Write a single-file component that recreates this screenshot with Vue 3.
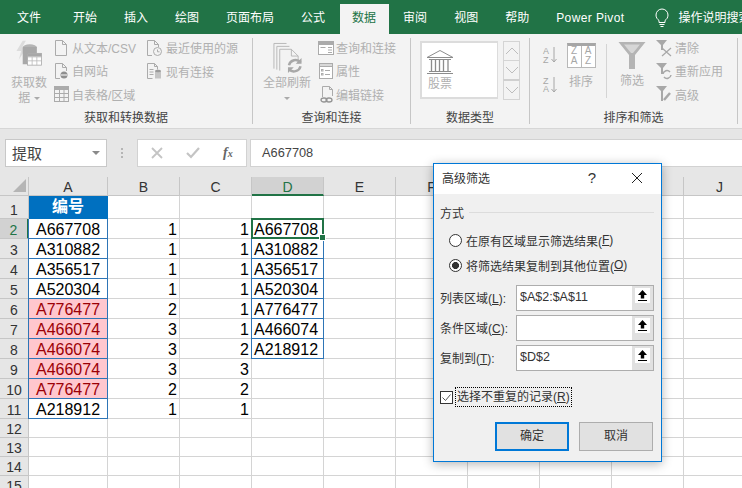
<script setup>
const tabs = ['开始','插入','绘图','页面布局','公式','数据','审阅','视图','帮助','Power Pivot']
const cols = ['A','B','C','D','E','F','G','H','I','J']
const codes = ['A667708','A310882','A356517','A520304','A776477','A466074','A466074','A466074','A776477','A218912']
const bVals = [1,1,1,1,2,3,3,3,2,1]
const cVals = [1,1,1,1,1,1,2,3,2,1]
const dVals = ['A667708','A310882','A356517','A520304','A776477','A466074','A218912']
const rows = []
for (let r = 1; r <= 15; r++) {
  const i = r - 2
  rows.push({
    r,
    a: r === 1 ? '编号' : (codes[i] || ''),
    b: bVals[i] ?? '',
    c: cVals[i] ?? '',
    d: dVals[i] || '',
    red: r >= 6 && r <= 10,
    blueA: r >= 2 && r <= 11,
    blueD: r >= 3 && r <= 8,
    tall: r === 1,
    short: r > 11
  })
}
const fields = [
  { label: '列表区域', key: 'L', value: '$A$2:$A$11', cls: 'f1' },
  { label: '条件区域', key: 'C', value: '', cls: 'f2' },
  { label: '复制到', key: 'T', value: '$D$2', cls: 'f3' }
]
</script>

<template>
  <div class="app">
    <div class="tabbar">
      <div class="tab first">文件</div>
      <div v-for="t in tabs" :key="t" class="tab" :class="{ active: t === '数据', latin: t === 'Power Pivot' }">{{ t }}</div>
      <svg class="bulb" width="16" height="22" viewBox="0 0 16 22" fill="none" stroke="#fff" stroke-width="1">
        <path d="M5 15.500V13.500C3.500 12.300 2 10.800 2 8a6 6 0 0 1 12 0c0 2.800-1.500 4.300-3 5.500v2z"/>
        <path d="M5.500 17.500h5M6.500 19.500h3"/>
      </svg>
      <div class="search">操作说明搜索</div>
    </div>

    <div class="ribbon">
      <div class="group g1">
        <div class="gbody">
          <div class="big big1">
            <svg width="34" height="42" viewBox="0 0 34 42">
              <path d="M9 1L1 14h6l-3 11 10-15H8l5-9z" fill="#dcdcdc"/>
              <ellipse cx="18" cy="9" rx="9" ry="3.500" fill="#b5b5b5"/>
              <path d="M9 9v22h10V18h8V9z" fill="#a8a8a8"/>
              <rect x="15" y="17" width="18" height="15" fill="#fff" stroke="#a8a8a8"/>
              <path d="M15 21.500h18M15 26.500h18M21 21.500V32M27 21.500V32" stroke="#b8b8b8" fill="none"/>
              <rect x="15" y="17" width="18" height="4" fill="#a8a8a8"/>
            </svg>
            <div class="lbl2">获取数<br>据 <span class="caret"></span></div>
          </div>
          <div class="col c1">
            <div class="item"><svg class="ic" width="16" height="18" viewBox="0 0 16 18" fill="none" stroke="#ababab"><path d="M2.500 1.500h7l4 4v11h-11zM9.500 1.500v4h4"/></svg>从文本/CSV</div>
            <div class="item"><svg class="ic" width="16" height="18" viewBox="0 0 16 18" fill="none" stroke="#ababab"><path d="M7 16.500H2.500v-15h7l4 4V9M9.500 1.500v4h4"/><circle cx="11" cy="13" r="3.500" fill="#8f8f8f" stroke="none"/><path d="M8 13h6" stroke="#fff"/></svg>自网站</div>
            <div class="item tbl"><svg class="ic" width="17" height="18" viewBox="0 0 17 18" fill="none" stroke="#ababab"><rect x="1.500" y="1.500" width="14" height="15"/><rect x="1.500" y="1.500" width="14" height="3" fill="#ababab"/><path d="M1.500 8.500h14M1.500 12.500h14M6.500 4.500v12M11 4.500v12"/></svg>自表格/区域</div>
          </div>
          <div class="col c2">
            <div class="item"><svg class="ic" width="18" height="18" viewBox="0 0 18 18" fill="none" stroke="#ababab"><path d="M7 16.500H2.500v-15h7l4 4V8M9.500 1.500v4h4"/><circle cx="12.500" cy="12.500" r="4"/><path d="M12.500 10.500v2.300h2"/></svg>最近使用的源</div>
            <div class="item"><svg class="ic" width="18" height="18" viewBox="0 0 18 18" fill="none" stroke="#ababab"><path d="M7.500 16.500h-5v-15h7l3 3v3M9.500 1.500v3h3M4.500 7.500h4M4.500 10h4M4.500 12.500h4"/><path d="M10 9h6v7.500h-6z" fill="#c4c4c4" stroke="none"/><ellipse cx="13" cy="9" rx="3" ry="1.200" fill="#9a9a9a" stroke="none"/></svg>现有连接</div>
          </div>
        </div>
        <div class="glabel">获取和转换数据</div>
      </div>

      <div class="group g2">
        <div class="gbody">
          <div class="big big2">
            <svg width="30" height="32" viewBox="0 0 30 32" fill="none" stroke="#b8b8b8">
              <path d="M1.500 27.500v-26h13M4.500 28.500v-24h13M7.500 29.500v-22h12l7 7v8"/>
              <path d="M19.500 7.500v7h7"/>
              <path d="M17 24a7 7 0 0 1 12-3M29 25a7 7 0 0 1-12 3" stroke="#a8a8a8" stroke-width="2.500"/>
              <path d="M30 16.500v6h-6zM16 32v-6h6z" fill="#a8a8a8" stroke="none"/>
            </svg>
            <div class="lbl2 mt9">全部刷新<br><span class="caret"></span></div>
          </div>
          <div class="col c3">
            <div class="item"><svg class="ic" width="17" height="18" viewBox="0 0 17 18" fill="none" stroke="#ababab"><rect x="1.500" y="2.500" width="15" height="13" fill="#fff"/><rect x="1.500" y="2.500" width="15" height="3" fill="#ababab"/><path d="M3.500 8.500h5M11 8.500h4M11 11h4M11 13.500h4"/></svg>查询和连接</div>
            <div class="item"><svg class="ic" width="17" height="18" viewBox="0 0 17 18" fill="none" stroke="#ababab"><rect x="2.500" y="1.500" width="13" height="15" fill="#fff"/><rect x="2.500" y="1.500" width="13" height="3" fill="#d8d8d8"/><path d="M8 8.500h5M8 12.500h5"/><rect x="4.500" y="7.500" width="1.500" height="1.500"/><rect x="4.500" y="11.500" width="1.500" height="1.500"/></svg>属性</div>
            <div class="item"><svg class="ic" width="17" height="18" viewBox="0 0 17 18" fill="none" stroke="#ababab"><path d="M5.500 12V1.500h7l3 3V11M12.500 1.500v3h3"/><ellipse cx="7" cy="15" rx="3" ry="2" stroke="#949494" stroke-width="1.300"/><ellipse cx="12" cy="15" rx="3" ry="2" stroke="#949494" stroke-width="1.300"/></svg>编辑链接</div>
          </div>
        </div>
        <div class="glabel">查询和连接</div>
      </div>

      <div class="group g3">
        <div class="gbody">
          <div class="gallery">
            <div class="stock">
              <svg width="28" height="25" viewBox="0 0 28 25" fill="none" stroke="#8c8c8c">
                <path d="M1 8.500L14 1.500l13 7zM3 10.500h22M3 22.500h22M1 24.500h26"/>
                <path d="M5.500 11v11M9.500 11v11M13.500 11v11M17.500 11v11M22 11v11" stroke-width="1.300"/>
              </svg>
              <div class="stocktxt">股票</div>
            </div>
          </div>
          <div class="gscroll">
            <div class="gbtn"><svg width="14" height="8" viewBox="0 0 14 8" fill="none" stroke="#bdbdbd"><path d="M1 7l6-6 6 6"/></svg></div>
            <div class="gbtn"><svg width="14" height="8" viewBox="0 0 14 8" fill="none" stroke="#bdbdbd"><path d="M1 1l6 6 6-6"/></svg></div>
            <div class="gbtn more"><svg width="14" height="8" viewBox="0 0 14 8" fill="none" stroke="#bdbdbd"><path d="M1 1l6 6 6-6"/></svg></div>
          </div>
        </div>
        <div class="glabel">数据类型</div>
      </div>

      <div class="group g4">
        <div class="gbody">
          <div class="azcol">
            <div class="azi"><div class="azl">A<br>Z</div><svg width="6" height="16" viewBox="0 0 6 16" fill="none" stroke="#a6a6a6"><path d="M3 0v15M.5 12L3 15l2.500-3"/></svg></div>
            <div class="azi"><div class="azl">Z<br>A</div><svg width="6" height="16" viewBox="0 0 6 16" fill="none" stroke="#a6a6a6"><path d="M3 0v15M.5 12L3 15l2.500-3"/></svg></div>
          </div>
          <div class="sortbig">
            <div class="sorticon">
              <div class="sc">Z<br>A</div><div class="sc">A<br>Z</div>
            </div>
            <div class="biglbl">排序</div>
          </div>
          <div class="vsep"></div>
          <div class="filterbig">
            <svg width="28" height="27" viewBox="0 0 28 27">
              <path d="M.500 0h27L17 13v14h-6V13z" fill="#b4b4b4"/>
              <path d="M6 2.500h16L15 11h-2z" fill="#d6d6d6"/>
            </svg>
            <div class="biglbl fl">筛选</div>
          </div>
          <div class="col c4">
            <div class="item"><svg class="ic" width="16" height="18" viewBox="0 0 16 18" fill="none"><path d="M0 1h11L7 6v5H5V6z" fill="#a8a8a8"/><path d="M6 9l9 8M15 9l-9 8" stroke="#a8a8a8" stroke-width="1.300"/></svg>清除</div>
            <div class="item"><svg class="ic" width="16" height="18" viewBox="0 0 16 18" fill="none"><path d="M0 1h11L7 6v6H5V6z" fill="#a8a8a8"/><path d="M7 12a4 4 0 0 1 7-2M15 13a4 4 0 0 1-7 2" stroke="#a8a8a8" stroke-width="1.500"/></svg>重新应用</div>
            <div class="item"><svg class="ic" width="16" height="18" viewBox="0 0 16 18" fill="none"><path d="M0 1h11L7 6v10H5V6z" fill="#a8a8a8"/><path d="M8 15l6-7" stroke="#a8a8a8" stroke-width="2.500"/></svg>高级</div>
          </div>
        </div>
        <div class="glabel">排序和筛选</div>
      </div>
    </div>

    <div class="fbar">
      <div class="namebox"><span class="nametxt">提取</span><i class="ncaret"></i></div>
      <div class="dots"></div>
      <div class="fbtns">
        <svg width="12" height="12" viewBox="0 0 12 12" fill="none" stroke="#c4c4c4" stroke-width="1.800"><path d="M1 1l10 10M11 1L1 11"/></svg>
        <svg width="14" height="12" viewBox="0 0 14 12" fill="none" stroke="#c4c4c4" stroke-width="2.200"><path d="M1 6l4 4 8-9"/></svg>
        <span class="fx">f<span class="fxx">x</span></span>
      </div>
      <div class="finput">A667708</div>
    </div>

    <div class="sheet">
      <div class="hcell corner"><svg width="13" height="13" viewBox="0 0 13 13"><path d="M13 0v13H0z" fill="#b5b5b5"/></svg></div>
      <div v-for="c in cols" :key="c" class="hcell colh" :class="{ sel: c === 'D' }">{{ c }}</div>
      <template v-for="row in rows" :key="row.r">
        <div class="hcell rowh" :class="{ tall: row.tall, short: row.short, selr: row.r === 2 }">{{ row.r }}</div>
        <div class="cell txtc" :class="{ head: row.r === 1, pink: row.red, blue: row.blueA }">{{ row.a }}</div>
        <div class="cell num">{{ row.b }}</div>
        <div class="cell num">{{ row.c }}</div>
        <div class="cell dcell" :class="{ blue: row.blueD, active: row.r === 2 }">{{ row.d }}</div>
        <div v-for="n in 6" :key="n" class="cell"></div>
      </template>
    </div>

    <div class="dialog">
      <div class="dtitle">
        <span class="dname">高级筛选</span>
        <span class="help">?</span>
        <svg width="12" height="12" viewBox="0 0 12 12" fill="none" stroke="#222"><path d="M1 1l10 10M11 1L1 11"/></svg>
      </div>
      <div class="dbody">
        <div class="fs"><span>方式</span><i></i></div>
        <label class="radio r1"><i class="rd"></i>在原有区域显示筛选结果(<u>F</u>)</label>
        <label class="radio r2"><i class="rd on"></i>将筛选结果复制到其他位置(<u>O</u>)</label>
        <div v-for="f in fields" :key="f.key" class="frow" :class="f.cls">
          <span class="flabel">{{ f.label }}(<u>{{ f.key }}</u>):</span>
          <div class="finp">
            <span class="fval">{{ f.value }}</span>
            <span class="pick">
              <svg width="15" height="15" viewBox="0 0 15 15"><rect width="15" height="15" fill="#fff"/><path d="M7.500 2L12 7H9.200v3.500H5.800V7H3z" fill="#000"/><path d="M3 12.500h9" stroke="#000"/></svg>
            </span>
          </div>
        </div>
        <div class="chk">
          <svg width="13" height="13" viewBox="0 0 13 13" fill="#fff" stroke="#333"><rect x=".5" y=".5" width="12" height="12"/><path d="M2.500 6.500l3 3 5-6" fill="none" stroke="#555"/></svg>
          <span class="chklbl">选择不重复的记录(<u>R</u>)</span>
        </div>
        <div class="btns">
          <div class="btn primary">确定</div>
          <div class="btn">取消</div>
        </div>
      </div>
    </div>
  </div>
</template>

<style>
html, body { margin: 0; background: #fff; }
</style>

<style scoped>
.app {
  position: relative;
  width: 742px;
  height: 488px;
  overflow: hidden;
  font-family: "Liberation Sans", "Noto Sans CJK SC", sans-serif;
  font-size: 12px;
  color: #333;
  background: #fff;
}
u { text-underline-offset: 1px; }

.tabbar {
  display: flex;
  height: 34px;
  background: #217346;
  color: #fff;
  white-space: nowrap;
}
.tab {
  padding: 9px 13.5px 0;
  line-height: 18px;
  box-sizing: border-box;
  height: 34px;
}
.tab.first { padding-left: 17px; padding-right: 18.5px; }
.tab.latin { letter-spacing: .4px; padding-right: 11px; }
.tab.active {
  margin-top: 4px;
  height: 30px;
  padding-top: 5px;
  background: linear-gradient(#f3f3f3, #f3f3f3) center / 49px 100% no-repeat;
  color: #217346;
}
.bulb { margin: 7px 0 0 18px; flex: none; }
.search { margin: 9px 0 0 9px; line-height: 18px; }

.ribbon {
  display: flex;
  height: 95px;
  box-sizing: border-box;
  padding-top: 4px;
  background: #f3f3f3;
  border-bottom: 1px solid #d6d6d6;
}
.group {
  display: flex;
  flex-direction: column;
  height: 86px;
  box-sizing: border-box;
  border-right: 1px solid #c6c6c6;
  flex: none;
}
.g1 { width: 253px; }
.g2 { width: 158px; }
.g3 { width: 119px; }
.g4 { width: 208px; }
.gbody { display: flex; height: 68px; flex: none; color: #b0b0b0; }
.glabel { text-align: center; height: 15px; line-height: 18px; color: #444; margin-top: 3px; }

.big { display: flex; flex-direction: column; align-items: center; text-align: center; line-height: 15px; }
.big1 { width: 40px; margin-left: 9px; padding-top: 2px; }
.big2 { width: 50px; margin-left: 9px; padding-top: 4px; }
.lbl2 { margin-top: 3px; white-space: nowrap; }
.mt9 { margin-top: 3px; }
.caret {
  display: inline-block;
  width: 0;
  height: 0;
  border: 3px solid transparent;
  border-top: 3px solid #aaa;
  border-bottom: 0;
  vertical-align: middle;
}

.col { display: flex; flex-direction: column; margin-top: -2px; }
.item { display: flex; align-items: center; height: 23.5px; white-space: nowrap; }
.ic { margin-right: 3px; flex: none; }
.c1 { margin-left: 4px; width: 92px; }
.tbl .ic { margin-right: 2px; }
.c3 { margin-left: 5px; }
.c3 .ic { margin-right: 2px; }
.c4 { margin-left: 10px; }

.gallery {
  width: 78px;
  height: 58px;
  box-sizing: border-box;
  margin: 3px 0 0 9px;
  background: #fff;
  border: 2px solid #dcdcdc;
  border-right-width: 1px;
}
.stock { display: flex; flex-direction: column; align-items: center; width: 36px; padding-top: 6px; }
.stocktxt { line-height: 16px; margin-top: 2px; }
.gscroll {
  display: flex;
  flex-direction: column;
  margin: 4px 0 0 5px;
  width: 17px;
  height: 58px;
  box-sizing: border-box;
}
.gbtn {
  flex: 1;
  display: flex;
  align-items: center;
  justify-content: center;
  border: 1px solid #d4d4d4;
  margin-top: -1px;
  background: #f3f3f3;
}
.gbtn.more { border-top: 2px solid #cfcfcf; }

.azcol { margin-left: 13px; width: 19px; display: flex; flex-direction: column; padding-top: 9px; }
.azi { display: flex; align-items: flex-start; height: 32px; gap: 2px; }
.azl { font-size: 9px; line-height: 8.5px; color: #a6a6a6; }
.sortbig { width: 32px; margin-left: 3px; display: flex; flex-direction: column; align-items: center; padding-top: 5px; }
.sorticon {
  display: flex;
  width: 29px;
  height: 25px;
  box-sizing: border-box;
  border: 1px solid #b8b8b8;
  border-top: 3px solid #a6a6a6;
  background: #fff;
  color: #a6a6a6;
  font-size: 10px;
  line-height: 10px;
  text-align: center;
}
.sc { flex: 1; }
.sc + .sc { border-left: 1px solid #b8b8b8; }
.biglbl { line-height: 16px; margin-top: 6px; }
.vsep { width: 1px; height: 54px; background: #d4d4d4; margin: 6px 0 0 9px; flex: none; }
.filterbig { width: 28px; margin-left: 11px; display: flex; flex-direction: column; align-items: center; padding-top: 4px; }
.biglbl.fl { margin-top: 4px; }

.fbar {
  display: flex;
  height: 48px;
  box-sizing: border-box;
  padding: 10px 0 0 5px;
  background: #e6e6e6;
}
.namebox {
  width: 102px;
  height: 28px;
  box-sizing: border-box;
  background: #fff;
  border: 1px solid #c8c8c8;
  padding: 0 6px;
  display: flex;
  align-items: center;
  justify-content: space-between;
  font-size: 15px;
  color: #444;
}
.nametxt { padding-bottom: 2px; }
.ncaret {
  width: 0;
  height: 0;
  border: 4px solid transparent;
  border-top: 4px solid #8a8a8a;
  border-bottom: 0;
}
.dots {
  width: 2px;
  height: 10px;
  margin: 9px 14px 0 14px;
  background: repeating-linear-gradient(#b5b5b5 0 2px, transparent 2px 4px);
  flex: none;
}
.fbtns {
  width: 110px;
  height: 28px;
  box-sizing: border-box;
  background: #fff;
  border: 1px solid #d2d2d2;
  display: flex;
  align-items: center;
  padding-left: 13px;
  gap: 23px;
  flex: none;
}
.fx { font-family: "Liberation Serif", serif; font-style: italic; font-weight: bold; font-size: 14px; color: #666; }
.fxx { font-size: 10px; }
.finput {
  flex: 1;
  height: 28px;
  box-sizing: border-box;
  margin-left: 3px;
  background: #fff;
  border: 1px solid #d2d2d2;
  border-right: 0;
  padding-left: 11px;
  line-height: 26px;
  font-size: 12.8px;
  color: #444;
}

.sheet {
  display: grid;
  grid-template-columns: 29px 79px 72px 72px 72px 72px 72px 72px 72px 72px 72px;
  grid-auto-rows: min-content;
  width: 800px;
  height: 311px;
  overflow: hidden;
  color: #000;
}
.hcell {
  background: #e6e6e6;
  box-sizing: border-box;
  border-right: 1px solid #c6c6c6;
  border-bottom: 1px solid #c6c6c6;
  color: #333;
  text-align: center;
  font-size: 14px;
}
.corner { height: 19px; display: flex; justify-content: flex-end; align-items: flex-end; padding: 0 2px 3px 0; }
.colh { height: 19px; line-height: 20px; }
.colh.sel { background: #d2d2d2; color: #217346; border-bottom: 2px solid #217346; }
.rowh { height: 20px; line-height: 22px; overflow: hidden; }
.rowh.tall { height: 23px; line-height: 28px; }
.rowh.short { height: 19px; line-height: 21px; }
.rowh.selr { background: #d2d2d2; color: #217346; border-right: 2px solid #217346; }
.cell {
  box-sizing: border-box;
  min-height: 19px;
  border-right: 1px solid #d4d4d4;
  border-bottom: 1px solid #d4d4d4;
  font-size: 16px;
  line-height: 17px;
  padding: 2px 2px 0;
  white-space: nowrap;
  overflow: hidden;
}
.txtc { text-align: center; }
.num { text-align: right; }
.head { background: #0070c0; color: #fff; font-weight: bold; padding-top: 0; line-height: 22px; border-color: #0070c0; }
.pink { background: #ffc7ce; color: #9c0006; }
.blue { border-right-color: #2e75b6; border-bottom-color: #2e75b6; box-shadow: -1px 0 0 #2e75b6; }
.dcell.active { position: relative; overflow: visible; border-color: #d4d4d4; }
.dcell.active::after {
  content: "";
  position: absolute;
  inset: -1px;
  border: 2px solid #217346;
}
.dcell.active::before {
  content: "";
  position: absolute;
  right: -3px;
  bottom: -3px;
  width: 5px;
  height: 5px;
  background: #217346;
  border: 1px solid #fff;
  box-sizing: content-box;
  z-index: 2;
}

.dialog {
  position: absolute;
  left: 433px;
  top: 163px;
  width: 229px;
  height: 299px;
  box-sizing: border-box;
  border: 1px solid #0078d7;
  background: #f0f0f0;
  box-shadow: 0 2px 10px rgba(0,0,0,.3);
  font-size: 12px;
  color: #333;
  display: flex;
  flex-direction: column;
}
.dtitle {
  height: 30px;
  box-sizing: border-box;
  flex: none;
  background: #fff;
  display: flex;
  align-items: center;
  padding: 0 18px 3px 8px;
}
.dname { flex: 1; }
.help { font-size: 15px; margin-right: 35px; }
.dbody { flex: 1; padding: 0 7px 0 6px; white-space: nowrap; }
.fs { display: flex; align-items: center; height: 18px; margin-top: 9px; }
.fs i { flex: 1; height: 1px; background: #dcdcdc; margin-left: 5px; }
.radio { display: flex; align-items: center; height: 18px; padding-left: 9px; }
.r1 { margin-top: 10px; }
.r2 { margin-top: 7px; }
.rd {
  width: 13px;
  height: 13px;
  box-sizing: border-box;
  border: 1px solid #333;
  border-radius: 50%;
  background: #fff;
  margin-right: 4px;
  flex: none;
}
.rd.on { background: radial-gradient(circle, #333 0 3.2px, #fff 3.8px); }
.frow { display: flex; align-items: center; height: 26px; }
.f1 { margin-top: 11px; }
.f2 { margin-top: 4px; }
.f3 { margin-top: 4px; }
.flabel { width: 76px; flex: none; padding-bottom: 2px; }
.finp {
  flex: 1;
  height: 26px;
  box-sizing: border-box;
  display: flex;
  background: #fff;
  border: 1px solid #adadad;
  font-size: 12.5px;
}
.fval { flex: 1; padding-left: 3px; line-height: 23px; }
.pick {
  width: 21px;
  background: #e1e1e1;
  flex: none;
  display: flex;
  justify-content: center;
  padding-top: 2px;
  box-sizing: border-box;
}
.chk { display: flex; align-items: center; height: 20px; margin-top: 16px; }
.chklbl {
  margin-left: 2px;
  height: 20px;
  line-height: 18px;
  box-sizing: border-box;
  border: 1px dotted #000;
  padding: 0 1px;
  flex: none;
}
.btns { display: flex; justify-content: flex-end; gap: 10px; margin-top: 15px; padding-right: 1px; }
.btn {
  width: 74px;
  height: 29px;
  box-sizing: border-box;
  background: #e1e1e1;
  border: 1px solid #adadad;
  text-align: center;
  line-height: 27px;
}
.btn.primary { border: 2px solid #0078d7; line-height: 25px; }
</style>
